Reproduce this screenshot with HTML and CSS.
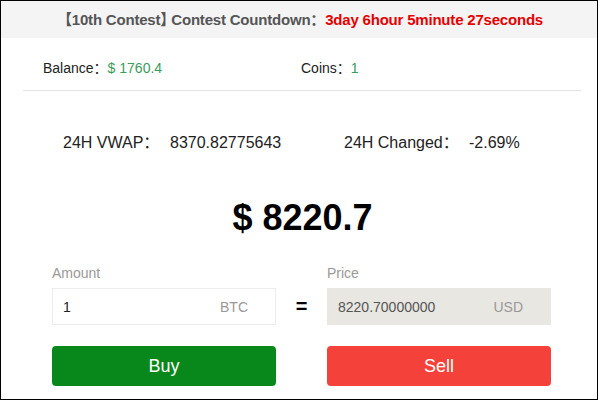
FILE: index.html
```html
<!DOCTYPE html>
<html lang="en">
<head>
    <meta charset="utf-8">
    <meta name="viewport" content="width=device-width, initial-scale=1">
    <title>Contest Trade</title>
    <link rel="stylesheet" href="styles.css">
</head>
<body>
    <div class="frame">
        <div class="header">
            <span class="bracket-open">【</span>10th Contest<span class="bracket-close">】</span>Contest Countdown：<span class="countdown">3day 6hour 5minute 27seconds</span>
        </div>

        <div class="account">
            <div class="account-item">Balance：<span class="green">$ 1760.4</span></div>
            <div class="account-item">Coins：<span class="green">1</span></div>
        </div>

        <div class="stats">
            <div class="stat stat-vwap">
                <span class="stat-label">24H VWAP：</span>
                <span class="stat-value">8370.82775643</span>
            </div>
            <div class="stat">
                <span class="stat-label stat-label-wide">24H Changed：</span>
                <span class="stat-value">-2.69%</span>
            </div>
        </div>

        <div class="price">$ 8220.7</div>

        <div class="trade">
            <div class="field-label">Amount</div>
            <div></div>
            <div class="field-label">Price</div>

            <div class="field">
                <span class="field-value">1</span>
                <span class="field-unit">BTC</span>
            </div>
            <div class="equals">=</div>
            <div class="field field-disabled">
                <span class="field-value">8220.70000000</span>
                <span class="field-unit">USD</span>
            </div>

            <button class="btn btn-buy">Buy</button>
            <div></div>
            <button class="btn btn-sell">Sell</button>
        </div>
    </div>
</body>
</html>
```

FILE: styles.css
```css
body {
    margin: 0;
    background: #fff;
    font-family: 'Liberation Sans', 'Noto Sans CJK SC', sans-serif;
    color: #222;
}
.frame {
    width: 598px;
    height: 400px;
    box-sizing: border-box;
    border: 1px solid #000;
    overflow: hidden;
}
.header {
    height: 37px;
    line-height: 37px;
    padding-left: 7px;
    background: #f4f4f5;
    text-align: center;
    font-size: 15px;
    font-weight: bold;
    letter-spacing: -0.2px;
    color: #555;
}
.bracket-open {
    margin-left: -5px;
}
.bracket-close {
    letter-spacing: -4px;
}
.countdown {
    color: #e60000;
}
.account {
    margin: 0 16px 0 22px;
    height: 46px;
    border-bottom: 1px solid #e4e4e4;
    display: flex;
    align-items: center;
    padding: 6px 0 0 20px;
    font-size: 14px;
    color: #222;
}
.account-item {
    width: 258px;
}
.green {
    color: #3a9b5c;
}
.stats {
    margin-top: 40px;
    padding-left: 62px;
    display: flex;
    font-size: 16px;
    line-height: 24px;
    color: #222;
}
.stat {
    display: flex;
}
.stat-vwap {
    width: 281px;
}
.stat-label {
    width: 107px;
}
.stat-label-wide {
    width: 125px;
}
.price {
    margin-top: 41px;
    padding-left: 7px;
    text-align: center;
    font-size: 36px;
    line-height: 44px;
    font-weight: bold;
    color: #000;
}
.trade {
    margin: 23px 0 0 51px;
    display: grid;
    grid-template-columns: 224px 51px 224px;
    grid-template-rows: 20px 37px 40px;
    row-gap: 5px;
}
.trade .btn {
    margin-top: 16px;
}
.field-label {
    font-size: 14px;
    line-height: 20px;
    color: #999;
}
.field {
    display: flex;
    align-items: center;
    justify-content: space-between;
    border: 1px solid #ececec;
    padding: 0 27px 0 10px;
    font-size: 14px;
    color: #222;
}
.field-disabled {
    background: #e9e7e2;
    border-color: #e9e7e2;
    color: #555;
}
.field-unit {
    color: #999;
}
.equals {
    text-align: center;
    font-size: 20px;
    font-weight: bold;
    line-height: 37px;
    color: #000;
}
.btn {
    border: none;
    border-radius: 4px;
    color: #fff;
    font-family: inherit;
    font-size: 18px;
    height: 40px;
    cursor: pointer;
}
.btn-buy {
    background: #08881b;
}
.btn-sell {
    background: #f4413a;
}
```
